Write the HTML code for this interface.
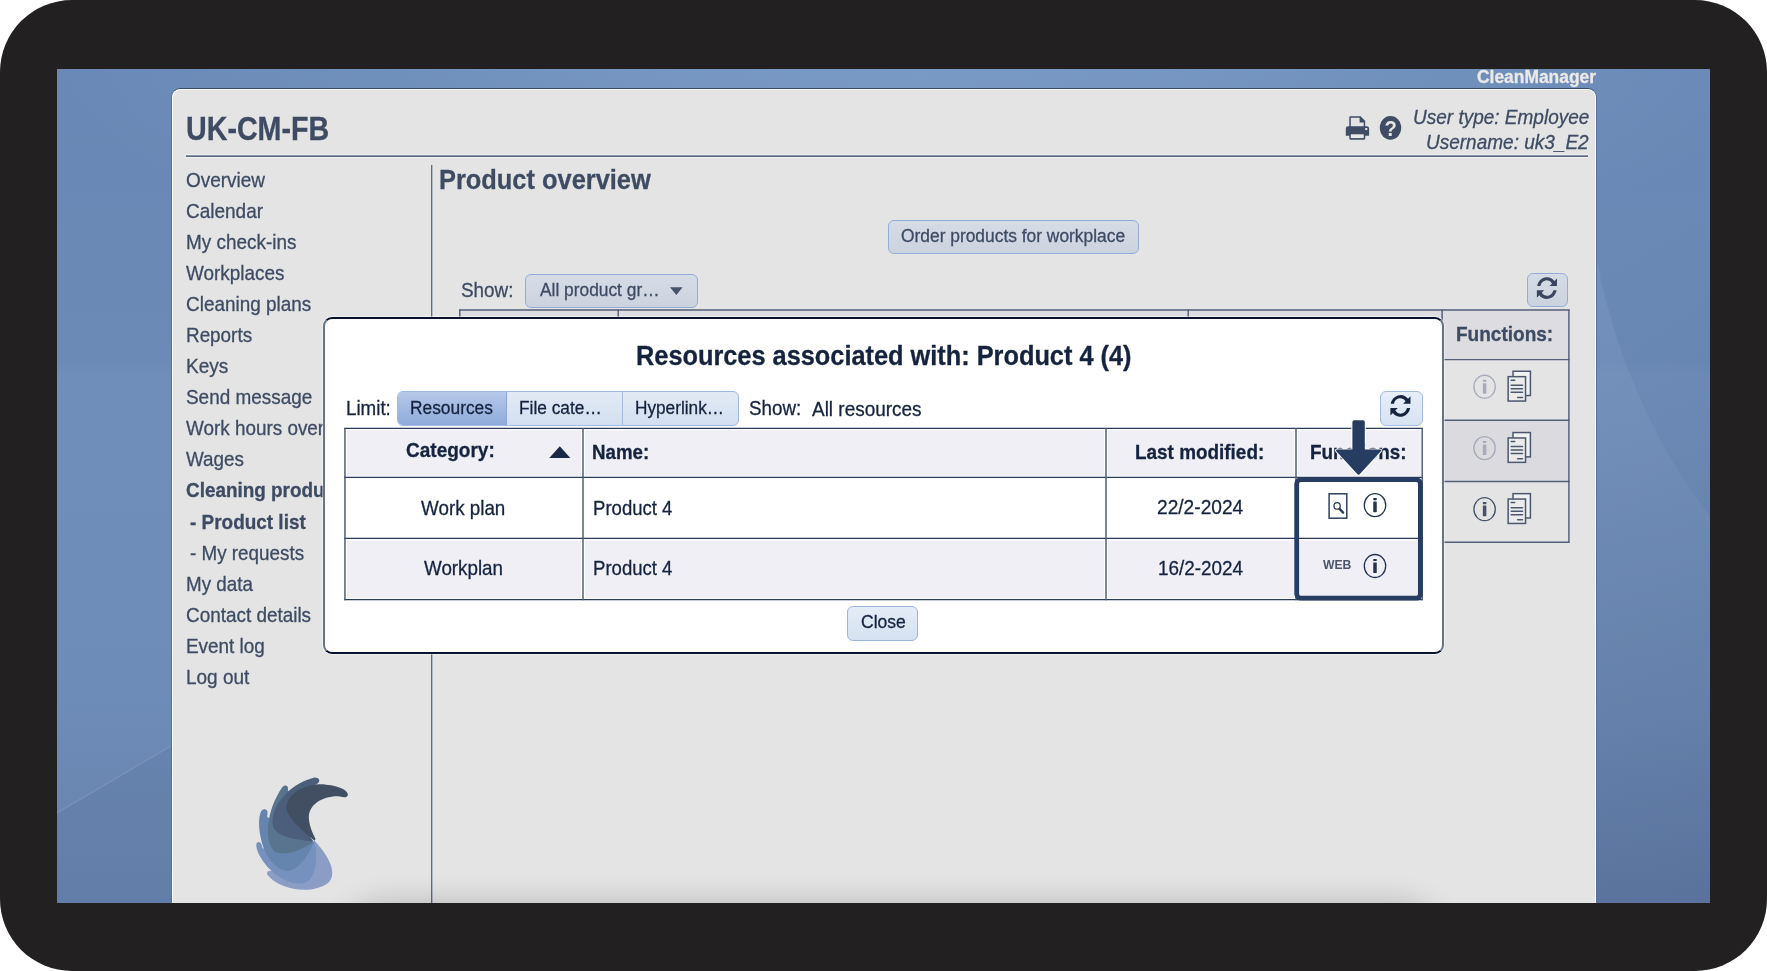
<!DOCTYPE html>
<html lang="en">
<head>
<meta charset="utf-8">
<title>CleanManager - Product overview</title>
<style>
html,body{margin:0;padding:0;background:#fff;}
body{width:1767px;height:971px;overflow:hidden;font-family:"Liberation Sans",Arial,Helvetica,sans-serif;color:#3e4b63;}
#frame{will-change:transform;position:absolute;left:0;top:0;width:1767px;height:971px;background:#222021;border-radius:72px;overflow:hidden;}
.a{position:absolute;box-sizing:border-box;}
.t{position:absolute;white-space:nowrap;line-height:1;transform-origin:0 50%;-webkit-text-stroke:.3px currentColor;}
#screen{left:57px;top:69px;width:1653px;height:834px;overflow:hidden;
 background:
  radial-gradient(ellipse 900px 260px at 52% -40px, rgba(140,175,215,.55), rgba(140,175,215,0) 100%),
  linear-gradient(to bottom right,rgba(20,30,70,0) 0%,rgba(20,30,70,0) 58%,rgba(20,30,70,.17) 100%),
  linear-gradient(to bottom,#6988b5 0%,#6b8ab6 35%,#6f8eb9 37%,#6d8cb7 75%,#6883ae 100%);}
#panel{left:171px;top:88px;width:1426px;height:815px;background:#e4e4e4;border:1px solid #5472a3;border-top-color:#3a4a68;border-bottom:0;border-radius:9px 9px 0 0;box-shadow:inset 1px 1px 0 rgba(255,255,255,.85), inset -1px 0 0 rgba(255,255,255,.85);}
.btn{border:1px solid #93add9;border-radius:6px;}
</style>
</head>
<body>
<div id="frame">
<div id="screen" class="a"><svg class="a" style="left:0;top:0" width="1653" height="834" viewBox="0 0 1653 834">
 <defs><linearGradient id="gw" x1="0" y1="0" x2="0" y2="1"><stop offset="0" stop-color="#a9c4ea" stop-opacity=".13"/><stop offset=".55" stop-color="#a9c4ea" stop-opacity=".04"/><stop offset="1" stop-color="#a9c4ea" stop-opacity="0"/></linearGradient></defs>
 <polygon points="0,744 114,677 114,834 0,834" fill="rgba(30,50,100,.07)"/>
 <line x1="0" y1="744" x2="114" y2="677" stroke="rgba(190,210,240,.2)" stroke-width="1.2"/>
 <path d="M1540,193 Q1570,340 1653,447 L1653,834 L1540,834 Z" fill="url(#gw)"/>
</svg></div>
<div id="panel" class="a"></div>

<!-- header rule + sidebar divider -->
<div class="a" style="left:186px;top:154px;width:1402px;height:4px;background:linear-gradient(to bottom,rgba(255,255,255,.45) 0,rgba(255,255,255,.45) 25%,#8791a4 25%,#8791a4 50%,#5c6981 50%,#5c6981 75%,rgba(255,255,255,.5) 75%,rgba(255,255,255,.5) 100%);"></div>
<div class="a" style="left:431px;top:165px;width:1px;height:738px;background:#5f6c84;box-shadow:1px 0 0 rgba(120,132,152,.45);"></div>

<!-- main page controls -->
<div class="a btn" style="left:887.5px;top:220px;width:251.5px;height:34px;background:linear-gradient(to bottom,#d6dce6,#cbd3df);"></div>
<div class="a btn" style="left:524.5px;top:274px;width:173.5px;height:33.5px;background:linear-gradient(to bottom,#d6dce6,#cbd3df);"></div>
<div class="a btn" style="left:1526.7px;top:273.3px;width:41.7px;height:34px;background:linear-gradient(to bottom,#d6dce6,#cbd3df);"></div>

<!-- background table -->
<div class="a" style="left:459.5px;top:309.5px;width:1109.5px;height:50px;background:#dcdce1;"></div>
<div class="a" style="left:1443px;top:420px;width:126px;height:61.3px;background:#dadadf;"></div>


<!-- bottom soft shadow inside the panel -->
<div class="a" style="left:172px;top:840px;width:1424px;height:63px;overflow:hidden;"><div class="a" style="left:190px;top:78px;width:1060px;height:40px;border-radius:20px;box-shadow:0 0 30px 14px rgba(0,0,0,.22);"></div></div>

<svg class="a" style="left:0;top:0" width="1767" height="971" viewBox="0 0 1767 971">
 <defs>
  <symbol id="ic-refresh" viewBox="-12 -12 24 24" overflow="visible">
   <path id="rf-half" d="M-9.75,-2.2 A10.05,11 0 0 1 7.62,-7.14 L10.05,-9.6 L10.05,-2.2 L2.65,-2.2 L5.17,-4.67 A6.6,7.5 0 0 0 -6.5,-2.2 Z"/>
   <path d="M-9.75,-2.2 A10.05,11 0 0 1 7.62,-7.14 L10.05,-9.6 L10.05,-2.2 L2.65,-2.2 L5.17,-4.67 A6.6,7.5 0 0 0 -6.5,-2.2 Z" transform="rotate(180)"/>
  </symbol>
  <symbol id="ic-info" viewBox="-13 -13 26 26" overflow="visible">
   <ellipse cx="0" cy="0" rx="10.7" ry="11.5" fill="none" stroke="currentColor" stroke-width="1.3"/>
   <rect x="-1.75" y="-3.6" width="3.5" height="10.6" rx=".4" fill="currentColor"/>
   <rect x="-1.75" y="-7.1" width="3.5" height="2.1" rx=".4" fill="currentColor"/>
  </symbol>
  <symbol id="ic-copy" viewBox="0 0 26 34" overflow="visible">
   <rect x="5.7" y=".75" width="17.4" height="24.3" fill="#f1f1f1" stroke="currentColor" stroke-width="1.5"/>
   <rect x=".85" y="6.15" width="17.4" height="24.4" fill="#ebebeb" stroke="currentColor" stroke-width="1.5"/>
   <g stroke="currentColor" stroke-width="1.5" stroke-linecap="round">
    <line x1="3.9" y1="9.7" x2="7.4" y2="9.7"/>
    <line x1="3.9" y1="14.8" x2="15.2" y2="14.8"/>
    <line x1="3.9" y1="18.3" x2="15.2" y2="18.3"/>
    <line x1="3.9" y1="21.8" x2="15.2" y2="21.8"/>
    <line x1="10.3" y1="26.9" x2="15.2" y2="26.9"/>
   </g>
  </symbol>
 </defs>

 <!-- printer -->
 <g fill="#3f4c63">
  <path d="M1345.8,128.5 a2.3,2.3 0 0 1 2.3,-2.3 h18.7 a2.3,2.3 0 0 1 2.3,2.3 v7.3 h-23.3 z"/>
  <path d="M1349.3,127 v-9.6 a1.1,1.1 0 0 1 1.1,-1.1 h10.2 l4.6,4.8 v5.9 h-1.5 v-4.6 h-4.1 v-4.6 h-8.8 v9.2 z"/>
  <path d="M1349.3,133 h15.9 v5.6 a1.1,1.1 0 0 1 -1.1,1.1 h-13.7 a1.1,1.1 0 0 1 -1.1,-1.1 z"/>
  <rect x="1350.8" y="134.3" width="12.9" height="3.8" fill="#e9e9e9"/>
  <rect x="1365.2" y="128" width="2.1" height="2.1" fill="#e4e4e4"/>
 </g>
 <!-- help -->
 <ellipse cx="1390.5" cy="127.8" rx="10.7" ry="11.9" fill="#3f4c63"/>
 <text x="1390.6" y="135.7" text-anchor="middle" font-family="Liberation Sans, Arial, sans-serif" font-weight="bold" font-size="22" fill="#e6e6e6" transform="translate(1390.6 0) scale(.92 1) translate(-1390.6 0)">?</text>

 <!-- dropdown caret -->
 <path d="M670,287.3 h12.6 l-6.3,7.6 z" fill="#46526a"/>
 <!-- refresh (page) -->
 <use href="#ic-refresh" x="1534.9" y="276.1" width="24" height="24" fill="#3a465d"/>

 <!-- background table lines -->
 <g stroke="#535f77" stroke-width="1.45" fill="none">
  <line x1="459" y1="310" x2="1569.5" y2="310"/>
  <line x1="1443" y1="359.6" x2="1569.5" y2="359.6"/>
  <line x1="1443" y1="420.2" x2="1569.5" y2="420.2"/>
  <line x1="1443" y1="481.4" x2="1569.5" y2="481.4"/>
  <line x1="1443" y1="542.2" x2="1569.5" y2="542.2"/>
  <line x1="1568.9" y1="309.5" x2="1568.9" y2="542.8"/>
  <line x1="459.8" y1="309.5" x2="459.8" y2="325"/>
  <line x1="618.2" y1="309.5" x2="618.2" y2="325"/>
  <line x1="1188.2" y1="309.5" x2="1188.2" y2="325"/>
  <line x1="1442.1" y1="309.5" x2="1442.1" y2="327"/>
 </g>
 <!-- background table icons -->
 <use href="#ic-info" x="1471.6" y="373.75" width="26" height="26" color="#a6acb9"/>
 <use href="#ic-info" x="1471.6" y="435.1" width="26" height="26" color="#a6acb9"/>
 <use href="#ic-info" x="1471.6" y="496.2" width="26" height="26" color="#46536a"/>
 <use href="#ic-copy" x="1507.3" y="370.5" width="26" height="34" color="#4b586e"/>
 <use href="#ic-copy" x="1507.3" y="431.8" width="26" height="34" color="#4b586e"/>
 <use href="#ic-copy" x="1507.3" y="492.9" width="26" height="34" color="#4b586e"/>

 <!-- logo -->
 <g transform="translate(200 740) scale(.175)">
  <path d="M655,575 C770,700 790,800 700,835 C600,880 450,850 385,770 C378,750 395,742 420,752 L655,575 Z" fill="#8b9dc4"/>
  <path d="M655,580 C680,700 650,800 600,815 C520,840 400,770 340,660 C315,610 318,582 335,583 C350,585 352,600 360,620 L655,580 Z" fill="#7791be"/>
  <path d="M650,585 C610,680 560,740 500,750 C420,740 350,640 338,500 C335,420 350,392 372,396 C392,400 385,420 384,440 L650,585 Z" fill="#6584ae"/>
  <path d="M645,585 C560,640 480,660 430,640 C360,580 380,400 470,270 C485,252 508,258 502,285 L645,585 Z" fill="#59748f"/>
  <path d="M650,580 C560,570 450,560 420,500 C390,400 500,250 650,215 C680,212 692,235 672,248 L560,320 L540,450 L650,580 Z" fill="#4b5e7b"/>
  <path d="M655,575 C560,500 480,420 495,370 C520,280 640,245 720,255 C800,262 850,290 845,315 C835,335 810,325 790,322 C700,320 620,370 622,445 C625,500 650,540 660,565 Z" fill="#424f63"/>
 </g>
</svg>

<span class="t" style="left:1477.28px;top:67.81px;font-size:18.3px;font-weight:bold;color:#ece9e6;transform:scaleX(0.9526);">CleanManager</span>
<span class="t" style="left:185.74px;top:112.59px;font-size:32.5px;font-weight:bold;transform:scaleX(0.8816);">UK-CM-FB</span>
<span class="t" style="left:1412.57px;top:106.86px;font-size:20.6px;font-style:italic;transform:scaleX(0.9226);">User type: Employee</span>
<span class="t" style="left:1426.27px;top:132.36px;font-size:20.6px;font-style:italic;transform:scaleX(0.9226);">Username: uk3_E2</span>
<span class="t" style="left:185.97px;top:169.93px;font-size:20.7px;transform:scaleX(0.9170);">Overview</span>
<span class="t" style="left:185.97px;top:200.98px;font-size:20.7px;transform:scaleX(0.9179);">Calendar</span>
<span class="t" style="left:185.97px;top:232.03px;font-size:20.7px;transform:scaleX(0.9143);">My check-ins</span>
<span class="t" style="left:185.97px;top:263.08px;font-size:20.7px;transform:scaleX(0.9133);">Workplaces</span>
<span class="t" style="left:185.97px;top:294.13px;font-size:20.7px;transform:scaleX(0.9152);">Cleaning plans</span>
<span class="t" style="left:185.97px;top:325.18px;font-size:20.7px;transform:scaleX(0.9120);">Reports</span>
<span class="t" style="left:185.97px;top:356.23px;font-size:20.7px;transform:scaleX(0.9209);">Keys</span>
<span class="t" style="left:185.97px;top:387.28px;font-size:20.7px;transform:scaleX(0.9148);">Send message</span>
<span class="t" style="left:185.97px;top:418.33px;font-size:20.7px;transform:scaleX(0.9123);">Work hours overview</span>
<span class="t" style="left:185.97px;top:449.38px;font-size:20.7px;transform:scaleX(0.9110);">Wages</span>
<span class="t" style="left:185.78px;top:480.45px;font-size:20.5px;font-weight:bold;transform:scaleX(0.9215);">Cleaning products</span>
<span class="t" style="left:190.28px;top:511.50px;font-size:20.5px;font-weight:bold;transform:scaleX(0.9238);">- Product list</span>
<span class="t" style="left:190.27px;top:542.53px;font-size:20.7px;transform:scaleX(0.9102);">- My requests</span>
<span class="t" style="left:185.97px;top:573.58px;font-size:20.7px;transform:scaleX(0.9085);">My data</span>
<span class="t" style="left:185.97px;top:604.63px;font-size:20.7px;transform:scaleX(0.9139);">Contact details</span>
<span class="t" style="left:185.97px;top:635.68px;font-size:20.7px;transform:scaleX(0.9142);">Event log</span>
<span class="t" style="left:185.97px;top:666.73px;font-size:20.7px;transform:scaleX(0.9179);">Log out</span>
<span class="t" style="left:439.34px;top:165.90px;font-size:28px;font-weight:bold;transform:scaleX(0.9071);">Product overview</span>
<span class="t" style="left:901.15px;top:227.00px;font-size:18.9px;transform:scaleX(0.9200);">Order products for workplace</span>
<span class="t" style="left:460.88px;top:279.73px;font-size:20.4px;transform:scaleX(0.9253);">Show:</span>
<span class="t" style="left:539.95px;top:281.00px;font-size:18.9px;transform:scaleX(0.9179);">All product gr…</span>
<span class="t" style="left:1456.48px;top:323.65px;font-size:20.5px;font-weight:bold;transform:scaleX(0.9273);">Functions:</span>

<!-- modal -->
<div id="modal" class="a" style="left:323px;top:317px;width:1121px;height:337px;background:#fff;border:2px solid #66728b;border-top-color:#0b1230;border-bottom-color:#0b1230;border-radius:9px;box-shadow:0 0 0 1px rgba(255,255,255,.45);"></div>


<!-- segmented control -->
<div class="a" style="left:397px;top:391px;width:342px;height:35px;border:1px solid #9fb8e2;border-radius:6px;overflow:hidden;background:linear-gradient(to bottom,#e2eaf5,#d3dff0);">
 <div class="a" style="left:-1px;top:-1px;width:109.5px;height:35px;background:linear-gradient(to bottom,#b7c9e9,#8daada);border-right:1px solid #8aa6d6;"></div>
 <div class="a" style="left:223.5px;top:-1px;width:1.4px;height:35px;background:#a3bbe3;"></div>
</div>
<!-- modal refresh button -->
<div class="a" style="left:1380px;top:391px;width:42.6px;height:35px;border:1.5px solid #a4bbe4;border-radius:6px;background:linear-gradient(to bottom,#e7eef8,#d7e3f2);"></div>
<!-- close button -->
<div class="a" style="left:846.8px;top:606.3px;width:71.4px;height:34.6px;border:1.2px solid #9db6e0;border-radius:6px;background:linear-gradient(to bottom,#e4ecf6,#d6e2f2);"></div>

<svg class="a" style="left:0;top:0" width="1767" height="971" viewBox="0 0 1767 971">
 <!-- cell fills -->
 <g fill="#efeff5">
  <rect x="347.1" y="430.2" width="233.8" height="45.6"/>
  <rect x="585.1" y="430.2" width="518.8" height="45.6"/>
  <rect x="1108.1" y="430.2" width="185.8" height="45.6"/>
  <rect x="1298.1" y="430.2" width="122.4" height="45.6"/>
  <rect x="347.1" y="540.4" width="233.8" height="57.8"/>
  <rect x="585.1" y="540.4" width="518.8" height="57.8"/>
  <rect x="1108.1" y="540.4" width="185.8" height="57.8"/>
  <rect x="1298.1" y="540.4" width="122.4" height="57.8"/>
 </g>
 <!-- table lines -->
 <g stroke="#2a3a58" stroke-width="1.25" fill="none">
  <line x1="344" y1="428.4" x2="1423" y2="428.4"/>
  <line x1="344" y1="477.45" x2="1423" y2="477.45"/>
  <line x1="344" y1="538.45" x2="1423" y2="538.45"/>
  <line x1="344" y1="599.7" x2="1423" y2="599.7"/>
 </g>
 <g stroke="#4b5973" stroke-width="1.45" fill="none">
  <line x1="344.95" y1="428" x2="344.95" y2="600.3"/>
  <line x1="583" y1="428" x2="583" y2="600.3"/>
  <line x1="1106" y1="428" x2="1106" y2="600.3"/>
  <line x1="1296" y1="428" x2="1296" y2="600.3"/>
  <line x1="1422.2" y1="428" x2="1422.2" y2="600.3"/>
 </g>
 <!-- sort caret -->
 <path d="M549.3,458 L559.8,446.2 L570.3,458 Z" fill="#1a2946"/>
 <!-- refresh icon -->
 <use href="#ic-refresh" x="1388.45" y="393.9" width="24" height="24" fill="#16243f"/>
 <!-- highlight frame -->
 <rect x="1296.7" y="479.7" width="123.7" height="118.4" rx="4" ry="4" fill="none" stroke="#263c60" stroke-width="4.8"/>
 <!-- row icons -->
 <g fill="none" stroke="#2a3a58">
  <rect x="1329.1" y="493.8" width="17.7" height="24.4" stroke-width="1.45"/>
  <ellipse cx="1337.1" cy="505.9" rx="3.1" ry="3.3" stroke-width="1.3"/>
  <line x1="1339.6" y1="508.9" x2="1343.1" y2="512.6" stroke-width="2.3" stroke-linecap="round"/>
 </g>
 <use href="#ic-info" x="1362" y="492.15" width="26" height="26" color="#24334f"/>
 <use href="#ic-info" x="1362" y="553" width="26" height="26" color="#24334f"/>
</svg>

<span class="t" style="left:636.38px;top:343.44px;font-size:27px;font-weight:bold;color:#15233f;transform:scaleX(0.9382);">Resources associated with: Product 4 (4)</span>
<span class="t" style="left:346.48px;top:397.73px;font-size:20.4px;color:#15233f;transform:scaleX(0.9203);">Limit:</span>
<span class="t" style="left:410.05px;top:399.10px;font-size:18.9px;color:#15233f;transform:scaleX(0.9181);">Resources</span>
<span class="t" style="left:518.75px;top:399.10px;font-size:18.9px;color:#15233f;transform:scaleX(0.9159);">File cate…</span>
<span class="t" style="left:634.95px;top:399.10px;font-size:18.9px;color:#15233f;transform:scaleX(0.9115);">Hyperlink…</span>
<span class="t" style="left:748.88px;top:397.73px;font-size:20.4px;color:#15233f;transform:scaleX(0.9200);">Show:</span>
<span class="t" style="left:811.68px;top:398.93px;font-size:20.4px;color:#15233f;transform:scaleX(0.9294);">All resources</span>
<span class="t" style="left:406.27px;top:440.06px;font-size:20.6px;font-weight:bold;color:#15233f;transform:scaleX(0.9233);">Category:</span>
<span class="t" style="left:592.27px;top:442.06px;font-size:20.6px;font-weight:bold;color:#15233f;transform:scaleX(0.9095);">Name:</span>
<span class="t" style="left:1135.07px;top:442.06px;font-size:20.6px;font-weight:bold;color:#15233f;transform:scaleX(0.9184);">Last modified:</span>
<span class="t" style="left:1309.77px;top:442.06px;font-size:20.6px;font-weight:bold;color:#15233f;transform:scaleX(0.9174);">Functions:</span>
<span class="t" style="left:421.48px;top:497.73px;font-size:20.4px;color:#15233f;transform:scaleX(0.9225);">Work plan</span>
<span class="t" style="left:593.38px;top:497.73px;font-size:20.4px;color:#15233f;transform:scaleX(0.9101);">Product 4</span>
<span class="t" style="left:1156.98px;top:497.43px;font-size:20.4px;color:#15233f;transform:scaleX(0.9389);">22/2-2024</span>
<span class="t" style="left:423.98px;top:558.23px;font-size:20.4px;color:#15233f;transform:scaleX(0.9215);">Workplan</span>
<span class="t" style="left:593.38px;top:558.23px;font-size:20.4px;color:#15233f;transform:scaleX(0.9101);">Product 4</span>
<span class="t" style="left:1158.18px;top:557.93px;font-size:20.4px;color:#15233f;transform:scaleX(0.9259);">16/2-2024</span>
<span class="t" style="left:1323.04px;top:559.40px;font-size:12.4px;font-weight:bold;color:#4d566a;transform:scaleX(0.9825);-webkit-text-stroke:0;">WEB</span>
<span class="t" style="left:860.75px;top:613.10px;font-size:18.9px;color:#15233f;transform:scaleX(0.9276);">Close</span>

<svg class="a" style="left:0;top:0" width="1767" height="971" viewBox="0 0 1767 971">
 <path d="M1352.4,422 a1.7,1.7 0 0 1 1.7,-1.7 h9 a1.7,1.7 0 0 1 1.7,1.7 V449.6 H1379.3 Q1382.3,449.6 1380.27,451.81 L1359.95,473.93 Q1358.6,475.4 1357.24,473.93 L1336.83,451.8 Q1334.8,449.6 1337.8,449.6 H1352.4 Z" fill="#263c60" stroke="#fff" stroke-opacity=".85" stroke-width="2.4" stroke-linejoin="round" paint-order="stroke"/>
</svg>

</div>
</body>
</html>
